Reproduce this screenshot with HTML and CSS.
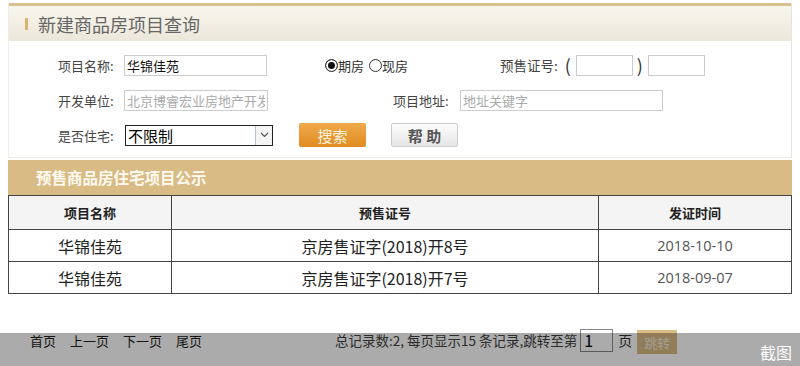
FILE: index.html
```html
<!DOCTYPE html>
<html lang="zh-CN">
<head>
<meta charset="utf-8">
<title>新建商品房项目查询</title>
<link rel="stylesheet" href="styles.css">
</head>
<body>
<div class="page">
  <div class="panel">
    <div class="panel-head"><span class="mark"></span><span class="panel-title">新建商品房项目查询</span></div>
    <div class="form">
      <div class="row">
        <span class="label">项目名称:</span>
        <input class="field w143" type="text" value="华锦佳苑">
        <span class="radios">
          <span class="radio on"></span><span class="rtext">期房</span>
          <span class="radio"></span><span class="rtext">现房</span>
        </span>
        <span class="label lic">预售证号:</span>
        <span class="paren">(</span>
        <input class="field w57" type="text">
        <span class="paren close">)</span>
        <input class="field w57" type="text">
      </div>
      <div class="row">
        <span class="label">开发单位:</span>
        <input class="field w144 ph" type="text" value="北京博睿宏业房地产开发有限公司">
        <span class="label addr">项目地址:</span>
        <input class="field w203" type="text" placeholder="地址关键字">
      </div>
      <div class="row">
        <span class="label">是否住宅:</span>
        <span class="select"><span class="select-val">不限制</span><span class="select-arrow"><svg width="9" height="6" viewBox="0 0 9 6"><path d="M1 1l3.5 3.5L8 1" fill="none" stroke="#555" stroke-width="1.2"/></svg></span></span>
        <button class="btn-search" type="button">搜索</button>
        <button class="btn-help" type="button">帮 助</button>
      </div>
    </div>
  </div>
  <div class="section">预售商品房住宅项目公示</div>
  <table class="grid">
    <thead>
      <tr><th class="c1">项目名称</th><th class="c2">预售证号</th><th class="c3">发证时间</th></tr>
    </thead>
    <tbody>
      <tr><td class="big">华锦佳苑</td><td class="big">京房售证字(2018)开8号</td><td class="date">2018-10-10</td></tr>
      <tr><td class="big">华锦佳苑</td><td class="big">京房售证字(2018)开7号</td><td class="date">2018-09-07</td></tr>
    </tbody>
  </table>
  <div class="pager">
    <span class="links"><a>首页</a><a>上一页</a><a>下一页</a><a>尾页</a></span>
    <span class="info">总记录数:2, 每页显示15 条记录,跳转至第</span>
    <input class="jump" type="text" value="1">
    <span class="pg">页</span>
    <button class="btn-jump" type="button">跳转</button>
  </div>
</div>
<div class="shot"><span>截图</span></div>
</body>
</html>
```
FILE: styles.css
```css
* { box-sizing: border-box; }
html, body { height: 100%; }
body {
  margin: 3px 8px 0;
  font-family: "Microsoft YaHei", "Noto Sans CJK SC", "Noto Sans", sans-serif;
  font-size: 13px;
  color: #333;
  background: #fff;
  overflow: hidden;
}
.page { width: 784px; }
.panel {
  border-left: 1px solid #f1ede6;
  border-right: 1px solid #e8e4dc;
  border-bottom: 1px solid #f0ece4;
}
.panel-head {
  height: 38px;
  border-top: 3px solid #d9c08f;
  background: linear-gradient(#f8f5ec, #f3efe4 50%, #ebe6da);
  display: flex;
  align-items: center;
  padding-left: 16px;
}
.mark { width: 3px; height: 12px; background: #dcb46e; margin-right: 10px; }
.panel-title { font-size: 18px; color: #666; line-height: 1; }
.form { padding: 12px 0 10px 49px; }
.row { display: flex; align-items: center; height: 24px; margin-bottom: 11px; }
.row:last-child { margin-bottom: 0; }
.label { width: 66px; color: #444; font-size: 13px; white-space: nowrap; }
.field {
  height: 21px;
  border: 1px solid #ccc;
  font-family: inherit;
  font-size: 13px;
  color: #111;
  padding: 0 2px;
  outline: none;
}
.field::placeholder { color: #aaa; }
.ph { color: #aaa; }
.w143 { width: 143px; }
.w144 { width: 144px; }
.w57 { width: 57px; }
.w203 { width: 203px; }
.radios { display: flex; align-items: center; margin-left: 58px; width: 175px; }
.radio {
  width: 13px; height: 13px; border-radius: 50%;
  border: 1px solid #333; background: #fff;
}
.radio.on { background: #111; box-shadow: inset 0 0 0 2px #fff; }
.rtext { margin-right: 5px; color: #333; }
.lic { width: auto; margin-right: 7px; font-size: 13.5px; }
.paren { font-size: 18px; color: #333; margin: 0 5px 0 0; }
.paren.close { margin: 0 5px 0 4px; }
.addr { margin-left: 125px; width: 67px; }
.select {
  display: flex;
  width: 148px; height: 21px;
  border: 1px solid #222;
  margin-left: 1px;
}
.select-val { flex: 1; font-size: 15px; line-height: 19px; padding-left: 2px; color: #000; }
.select-arrow {
  width: 17px; display: flex; align-items: center; justify-content: center;
  border-left: 1px solid #b8c4d4; background: #f4f4f4;
}
.btn-search {
  margin-left: 26px;
  width: 67px; height: 24px;
  border: 0; border-radius: 2px;
  background: linear-gradient(#f0a94a, #e08c22);
  color: #fff3df;
  font-family: inherit; font-size: 15px;
}
.btn-help {
  margin-left: 25px;
  width: 67px; height: 24px;
  border: 1px solid #ccc; border-radius: 2px;
  background: linear-gradient(#fdfdfd, #e6e6e6);
  color: #555; font-weight: bold;
  font-family: inherit; font-size: 15px;
}
.section {
  margin-top: 2px;
  height: 35px;
  background: #d9bb85;
  color: #fffaf0;
  font-weight: bold;
  font-size: 15.5px;
  line-height: 35px;
  padding-left: 28px;
}
.grid { width: 784px; border-collapse: collapse; }
.grid th, .grid td { border: 1px solid #444; text-align: center; }
.grid th { height: 34px; background: #f4f4f4; font-size: 13px; color: #222; }
.c1 { width: 163px; }
.c3 { width: 193px; }
.grid td { height: 32px; }
.big { font-size: 16px; color: #222; }
.date { font-family: "Open Sans", "Noto Sans", sans-serif; font-size: 14.5px; color: #555; }
.pager {
  display: flex; align-items: center;
  margin-top: 34px;
  padding-left: 22px;
  height: 24px;
}
.links { display: flex; gap: 14px; width: 305px; }
.links a { color: #222; }
.info { color: #444; font-size: 13.5px; }
.jump {
  width: 33px; height: 23px;
  border: 1px solid #888;
  font-family: inherit; font-size: 16px;
  padding: 0 3px; margin-left: 3px;
}
.pg { margin: 0 5px; font-size: 14px; }
.btn-jump {
  width: 40px; height: 24px; border: 0;
  background: #d9bb85; color: #f5ead8;
  font-family: inherit; font-size: 13px;
  margin-top: 4px;
}
.shot {
  position: absolute; left: 0; right: 0; top: 333px; height: 33px;
  background: rgba(0, 0, 0, 0.33);
  display: flex; justify-content: flex-end; align-items: center;
  padding-right: 8px;
}
.shot span { color: #fff; font-size: 16px; margin-top: 4px; }
```
